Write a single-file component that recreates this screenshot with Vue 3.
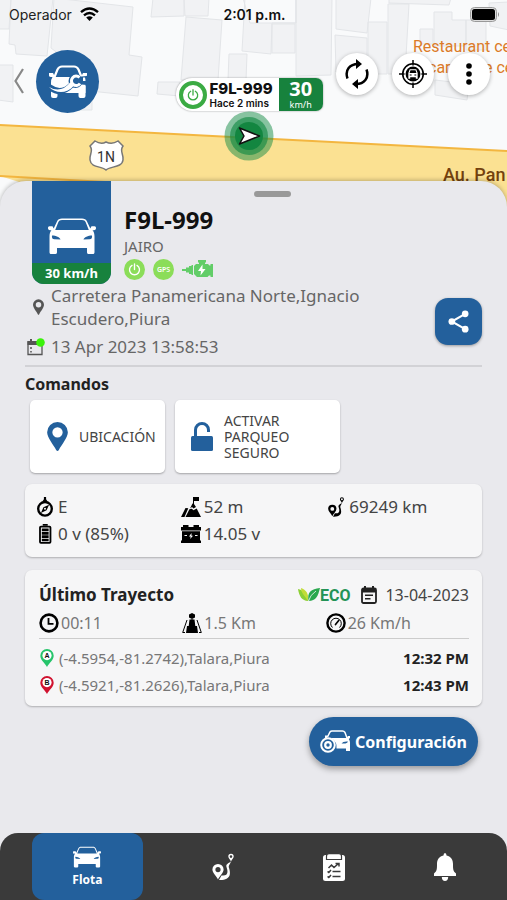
<script setup>
import { ref } from 'vue'

const vehicle = {
  plate: 'F9L-999',
  driver: 'JAIRO',
  speed: 30,
  address: 'Carretera Panamericana Norte,Ignacio Escudero,Piura',
  date: '13 Apr 2023 13:58:53',
}

const stats = [
  { icon: 'compass', text: 'E' },
  { icon: 'mountain', text: '52 m' },
  { icon: 'route', text: '69249 km' },
  { icon: 'battery', text: '0 v (85%)' },
  { icon: 'car-battery', text: '14.05 v' },
]

const tripStats = [
  { icon: 'clock', text: '00:11' },
  { icon: 'road', text: '1.5 Km' },
  { icon: 'gauge', text: '26 Km/h' },
]

const stops = [
  { mark: 'A', place: '(-4.5954,-81.2742),Talara,Piura', time: '12:32 PM' },
  { mark: 'B', place: '(-4.5921,-81.2626),Talara,Piura', time: '12:43 PM' },
]

const tabs = [
  { id: 'fleet', icon: 'car', label: 'Flota' },
  { id: 'routes', icon: 'route', label: 'Rutas' },
  { id: 'reports', icon: 'clipboard', label: 'Reportes' },
  { id: 'alerts', icon: 'bell', label: 'Alertas' },
]
const active = ref('fleet')
</script>

<template>
  <div class="screen">
    <svg class="symbols" aria-hidden="true">
      <symbol id="car" viewBox="0 0 48 36">
        <path fill="currentColor" fill-rule="evenodd" d="M14 0.5H34C36.5 0.5 38 1.3 39 3.5L42.300 10.500L43.500 8.300H46.500C47.800 8.300 48 9.300 48 10.300C48 11.800 47 12.300 44.500 12.300C46 14 46.500 16 46.500 18.500V34C46.500 35.500 46 36 44.800 36H40.500C39.300 36 39 35.300 39 34V30H9V34C9 35.300 8.700 36 7.500 36H3.200C2 36 1.500 35.500 1.500 34V18.500C1.500 16 2 14 3.500 12.300C1 12.300 0 11.800 0 10.300C0 9.300 .2 8.300 1.500 8.300H4.500L5.700 10.500L9 3.500C10 1.300 11.500 .5 14 .5ZM14 2C12 2 11 2.700 10.300 4.200L7.200 12H40.800L37.700 4.200C37 2.700 36 2 34 2ZM4 17.500C3.700 20 4.200 21 6.500 21.200L12.500 21.500C12 19.500 8 17.500 4 17.500ZM44 17.500C40 17.500 36 19.500 35.500 21.500L41.500 21.200C43.800 21 44.300 20 44 17.500Z" />
      </symbol>
      <symbol id="pin" viewBox="0 0 20 28">
        <path fill="currentColor" fill-rule="evenodd" d="M10 0A10 10 0 0 1 20 10C20 15 14 22 11.300 27Q10 29 8.700 27C6 22 0 15 0 10A10 10 0 0 1 10 0ZM10 5A5 5 0 1 0 10 15A5 5 0 1 0 10 5Z" />
      </symbol>
      <symbol id="power" viewBox="0 0 24 24">
        <path fill="none" stroke="currentColor" stroke-width="2.200" stroke-linecap="round" d="M8 5.500A8 8 0 1 0 16 5.500M12 3V12" />
      </symbol>
      <symbol id="route" viewBox="0 0 22 27">
        <path fill="currentColor" fill-rule="evenodd" d="M6 10.500A5.600 5.600 0 0 1 11.600 16C11.600 19.500 7.500 22.500 6 26C4.500 22.500 .4 19.500 .4 16A5.600 5.600 0 0 1 6 10.500ZM6 13.500A2.600 2.600 0 1 0 6 18.700A2.600 2.600 0 1 0 6 13.500ZM19 .3A2.700 2.700 0 0 1 21.700 3C21.700 4.800 19.500 6 19 8.300C18.500 6 16.300 4.800 16.300 3A2.700 2.700 0 0 1 19 .3ZM19 1.800A1.300 1.300 0 1 0 19 4.400A1.300 1.300 0 1 0 19 1.800Z" />
        <path fill="currentColor" d="M18.800 8C16.500 10 13.500 10.500 14.500 13.500C15.500 16.500 17.500 23 9.500 22L7 26.500C20 27 18.500 19 17 14.500C16 11.500 18.500 11 18.800 8Z" />
      </symbol>
      <symbol id="compass" viewBox="0 0 20 22">
        <circle cx="10" cy="13" r="7.500" fill="none" stroke="currentColor" stroke-width="2.600" />
        <path fill="currentColor" fill-rule="evenodd" d="M8.800 2.500V0H11.200V2.500L12.500 4.500H7.500ZM14.500 8.500L11.700 14.700L5.500 17.500L8.300 11.300ZM10 11.900A1.100 1.100 0 1 0 10 14.100A1.100 1.100 0 1 0 10 11.900Z" />
      </symbol>
      <symbol id="mountain" viewBox="0 0 20 20">
        <path fill="currentColor" d="M12 0H18V4H13V7L15 10L12.500 11.500L11 10L9 11.500L11.500 6.500H12ZM8.400 12.200L10.800 11.700L12.500 13.300L15.700 11.500L20 20H4.500ZM4.500 11L7.300 11.300L3.500 20H0Z" />
      </symbol>
      <symbol id="battery" viewBox="0 0 16 22">
        <rect x="2.500" y="2.800" width="11.500" height="18" rx="1" fill="none" stroke="currentColor" stroke-width="2" />
        <path fill="currentColor" d="M5.500 0H11V2H5.500ZM4.500 5H12V7.900H4.500ZM4.500 8.700H12V11.700H4.500ZM4.500 12.500H12V15.400H4.500ZM4.500 16.200H12V18.900H4.500Z" />
      </symbol>
      <symbol id="car-battery" viewBox="0 0 20 18">
        <path fill="currentColor" fill-rule="evenodd" d="M2 0H7.500V2H12.500V0H18V2H20V5.500H0V2H2ZM1 6.200H19V15.500H20V18H0V15.500H1ZM10.500 8L8 11.500H9.700L9.200 14L12 10.700H10.500ZM3.500 10V11H6V10ZM14 10V11H16.500V10Z" />
      </symbol>
      <symbol id="clock" viewBox="0 0 20 20">
        <circle cx="10" cy="10" r="8.400" fill="none" stroke="currentColor" stroke-width="2.600" />
        <path fill="none" stroke="currentColor" stroke-width="1.800" d="M9.500 5V10.800H14.500" />
      </symbol>
      <symbol id="road" viewBox="0 0 20 20">
        <path fill="currentColor" d="M7.500 6.500H12.500L13.300 13H15L16 20H4L5 13H6.700ZM7 1.500L10 0L13 1.500V4.500L10 6L7 4.500Z" />
        <path fill="none" stroke="currentColor" stroke-width="1" d="M5 7L.7 19.500H3M15 7L19.300 19.500H17M10 6V9" />
      </symbol>
      <symbol id="gauge" viewBox="0 0 20 20">
        <circle cx="10" cy="10" r="8.600" fill="none" stroke="currentColor" stroke-width="2.400" />
        <path fill="none" stroke="currentColor" stroke-width="1" d="M6.500 14.500A5.300 5.300 0 1 1 13.500 14.500" />
        <path fill="none" stroke="currentColor" stroke-width="1.700" stroke-linecap="round" d="M9.500 11.500L12.700 7.500" />
      </symbol>
      <symbol id="clipboard" viewBox="0 0 22 28">
        <path fill="currentColor" d="M2.500 2H19.500Q22 2 22 4.500V25.500Q22 28 19.500 28H2.500Q0 28 0 25.500V4.500Q0 2 2.500 2Z" />
        <path fill="currentColor" stroke="#3a3a3a" stroke-width="1.200" d="M6 .6H16Q18.500 .6 18.500 3V6.500H3.500V3Q3.500 .6 6 .6Z" />
        <path fill="none" stroke="#3a3a3a" stroke-width="1.500" d="M5.500 15L8.500 12L11 14.500L15.500 10.500M12.500 10.500H16V13.500M9.500 18.500H17.500M9.500 23.500H17.500M4.500 18.500L5.800 19.500L8 17M4.500 23.500L5.800 24.500L8 22" />
      </symbol>
      <symbol id="bell" viewBox="0 0 22 28">
        <path fill="currentColor" d="M11 0Q12.500 0 12.500 2.500C17.500 3.500 19 7.500 19 11C19 16 19 18 22 20.500V23H0V20.500C3 18 3 16 3 11C3 7.500 4.500 3.500 9.500 2.500Q9.500 0 11 0ZM7.800 24H14.200Q14 28 11 28Q8 28 7.800 24Z" />
      </symbol>
    </svg>

    <header class="map">
      <svg class="map-art" viewBox="0 0 507 220" preserveAspectRatio="xMidYMin slice" aria-hidden="true">
        <rect width="507" height="220" fill="#f9fafb" />
        <g fill="#f1f2f4" stroke="#e3e5e8">
          <path d="M-2 -2H11L9 29H-2ZM11 -2H53L47 56L16 54L15 45L9 44ZM54 -2L133 7L129 55L142 57L138 96L90 91L80 70L51 48ZM-2 65H13V102L-2 100ZM62 92H92V110H70Z" />
          <path d="M153 -2H184V16L151 17ZM184 -2H209L208 16H185ZM186 17L222 20L218 80H181ZM245 -2L242 51L271 54L272 23H296V-2ZM243 -2H296V23H250ZM229 54H247L246 80H228ZM158 82H180V96L157 94ZM272 24H295V53H272ZM296 -2H332L331 75L296 76ZM336 -2H371L367 33L336 29ZM335 35L367 38V72H336ZM368 22H387V74H368ZM388 4H409L405 74H388ZM389 -2H451L449 5L389 3ZM434 12H452V20H466V46H434ZM420 29H433V44H420ZM466 20H486V50H466ZM489 3L509 2V30L490 26ZM435 80L469 84L467 100L435 95Z" />
        </g>
        <path fill="#fbe192" d="M0 125L507 151V220H140L0 176Z" />
        <path fill="none" stroke="#f3b640" stroke-width="2" d="M0 125L507 151M0 176L140 184" />
        <path fill="#fff" stroke="#777" stroke-width="1.500" d="M95 141Q101 145 106 142Q112 145 118 141L123 146C119 151 124 154 123 160C122 168 110 166 106 170C102 166 91 168 90 160C89 154 94 151 90 146Z" />
        <text class="shield-text" x="106" y="162" text-anchor="middle">1N</text>
        <text class="poi" x="413" y="52">Restaurant ce</text>
        <text class="poi" x="428" y="73">car</text>
        <text class="poi" x="484" y="73">e ce</text>
        <text class="road-name" x="443" y="181">Au. Pan</text>
      </svg>

      <div class="status">
        <span class="carrier">Operador
          <svg width="19" height="14" viewBox="0 0 19 14" aria-hidden="true"><path fill="none" stroke="#000" stroke-width="2.400" d="M1 5.200Q9.500 -2.400 18 5.200M4 8.300Q9.500 3.500 15 8.300" /><path d="M9.500 14L6.200 10.600Q9.500 8 12.800 10.600Z" /></svg>
        </span>
        <span class="time">2:01 p.m.</span>
        <svg class="cell" width="30" height="15" viewBox="0 0 30 15" aria-hidden="true"><rect x=".5" y=".5" width="26" height="14" rx="4" fill="#ddd" stroke="#999" /><rect x="2" y="2" width="23" height="11" rx="2.500" /><path fill="#888" d="M28 5Q30 7.500 28 10Z" /></svg>
      </div>

      <div class="tools">
        <button class="back" aria-label="Volver"><svg width="10" height="26" viewBox="0 0 10 26"><path fill="none" stroke="#888" stroke-width="2.200" d="M9 1L1.500 13L9 25" /></svg></button>
        <button class="avatar" aria-label="Servicio">
          <svg width="38" height="33" viewBox="0 0 38 33">
            <path fill="none" stroke="#fff" stroke-width="2.200" stroke-linejoin="round" d="M5.500 12L8.500 4.500Q10 1.500 13 1.500H25Q28 1.500 29.500 4.500L32.500 12" />
            <path fill="#fff" d="M0 8H4L6 12H32L34 8H38V10.500Q37 12 34.500 12Q36.500 14 36.500 18V31Q36.500 33 34.500 33H31.500Q29.500 33 29.500 31V28H8.500V31Q8.500 33 6.500 33H4Q2 33 2 31V18Q2 14 3.500 12Q0 12 0 10.500Z" />
            <path fill="none" stroke="#23609c" stroke-width="6" stroke-linecap="round" d="M1 22.500Q12 30.500 22 20.500" />
            <circle cx="26.500" cy="16" r="7" fill="#23609c" />
            <path fill="#23609c" d="M27 12L38 11V20L27 19Z" />
            <path fill="#fff" d="M33 21H36.500V28H24Q30 26 33 21ZM34 12.500H36Q36.500 14 36.500 16H34Z" />
            <path fill="none" stroke="#fff" stroke-width="3" d="M30.500 12.500A4.700 4.700 0 1 0 31 18.500" />
            <path fill="#fff" d="M0 22Q12 29 21.500 17L25 20.500C18 29 7 29 0 22Z" />
          </svg>
        </button>
        <button class="round first" aria-label="Actualizar">
          <svg width="24" height="30" viewBox="0 0 24 30"><path fill="none" stroke="#000" stroke-width="2.500" d="M2.500 19.500C-.5 11 5 5 13 5M21.500 10.500C24.500 19 19 25 11 25" /><path d="M11 0L17 5L11 10ZM13 20L7 25L13 30Z" /></svg>
        </button>
        <button class="round" aria-label="Centrar">
          <svg width="28" height="28" viewBox="0 0 30 30"><circle cx="15" cy="15" r="11" fill="none" stroke="#000" stroke-width="1.700" /><circle cx="15" cy="15" r="8" /><path stroke="#000" stroke-width="1.600" d="M15 0V6M15 24V30M0 15H6M24 15H30" /><path fill="#fff" fill-rule="evenodd" d="M11.500 10H18.500L20 14V20H18V18.500H12V20H10V14ZM12.300 11L11.300 14H18.700L17.700 11ZM11.500 15.500V16.700H13.500V15.500ZM16.500 15.500V16.700H18.500V15.500Z" /></svg>
        </button>
        <button class="round" aria-label="Más opciones">
          <svg width="6" height="22" viewBox="0 0 6 22"><circle cx="3" cy="3" r="2.800" /><circle cx="3" cy="11" r="2.800" /><circle cx="3" cy="19" r="2.800" /></svg>
        </button>
      </div>

      <div class="tag">
        <span class="tag-power"><svg width="14" height="14"><use href="#power" /></svg></span>
        <span class="tag-text"><b>{{ vehicle.plate }}</b><small>Hace 2 mins</small></span>
        <span class="tag-speed"><b>{{ vehicle.speed }}</b><small>km/h</small></span>
      </div>
      <svg class="puck" width="50" height="50" viewBox="0 0 50 50" aria-hidden="true"><circle cx="25" cy="25" r="24.500" fill="#168b45" opacity=".5" /><circle cx="25" cy="25" r="19" fill="#168b45" opacity=".65" /><circle cx="25" cy="25" r="14" fill="#138640" /><path fill="#fff" stroke="#111" stroke-width="1.500" stroke-linejoin="round" d="M15.500 17L35.500 25L15.500 33L20 25Z" /></svg>
    </header>

    <main class="sheet">
      <span class="handle"></span>
      <section class="hero">
        <div class="thumb">
          <div class="thumb-car"><svg width="48" height="36"><use href="#car" /></svg></div>
          <div class="thumb-speed">{{ vehicle.speed }} km/h</div>
        </div>
        <div class="info">
          <h1>{{ vehicle.plate }}</h1>
          <p>{{ vehicle.driver }}</p>
          <div class="badges">
            <span class="badge"><svg width="15" height="15"><use href="#power" /></svg></span>
            <span class="badge gps">GPS</span>
            <svg width="32" height="19" viewBox="0 0 32 19" aria-hidden="true"><path fill="#62cd68" d="M0 9H4V7.500H7V6H9.500V5H11V15H9.500V14H7V12.500H4V11H0ZM12 6L14 4H17V2.500H16V0H24V2.500H23V4H26L27.500 5.500H28.500V4H31V17H28.500V15.500H27L25.500 17H15L12 14Z" /><path fill="#fff" d="M20.500 4.500L16 11H19L18.500 15.500L23.500 9H20.500Z" /></svg>
          </div>
        </div>
      </section>

      <section class="where">
        <div class="where-text">
          <div class="line">
            <span class="line-icon"><svg width="11" height="16"><use href="#pin" /></svg></span>
            <p>{{ vehicle.address }}</p>
          </div>
          <div class="line date">
            <span class="line-icon"><svg width="18" height="18" viewBox="0 0 18 18" aria-hidden="true"><path fill="none" stroke="#555" stroke-width="1.300" d="M1 4H15V16.500H1Z" /><path fill="#555" d="M.5 3H15V7H.5ZM3 1H5V4H3Z" /><path fill="#777" d="M3 9H5V11H3ZM3 13H5V14.500H3Z" /><circle cx="13.500" cy="4.500" r="4.300" fill="#3bf20b" /></svg></span>
            <p>{{ vehicle.date }}</p>
          </div>
        </div>
        <button class="share" aria-label="Compartir">
          <svg width="21" height="23" viewBox="0 0 22 24"><path fill="none" stroke="#fff" stroke-width="2.200" d="M18 4L4 12L18 20" /><g fill="#fff"><circle cx="18" cy="4" r="3.500" /><circle cx="4" cy="12" r="3.500" /><circle cx="18" cy="20" r="3.500" /></g></svg>
        </button>
      </section>

      <h2>Comandos</h2>
      <section class="commands">
        <button><svg width="21" height="29"><use href="#pin" /></svg><span>UBICACIÓN</span></button>
        <button class="wide">
          <svg width="22" height="29" viewBox="0 0 22 29" aria-hidden="true"><path fill="none" stroke="currentColor" stroke-width="3" d="M4.500 15V8A6.500 6.500 0 0 1 17.500 8V10" /><rect y="14" width="22" height="15" rx="1.500" fill="currentColor" /></svg>
          <span>ACTIVAR PARQUEO SEGURO</span>
        </button>
      </section>

      <section class="card stats">
        <div v-for="s in stats" :key="s.icon" class="stat"><svg width="20" height="20"><use :href="'#' + s.icon" /></svg><span>{{ s.text }}</span></div>
      </section>

      <section class="card trip">
        <div class="trip-head">
          <h2>Último Trayecto</h2>
          <span class="eco"><svg width="22" height="14" viewBox="0 0 22 14" aria-hidden="true"><path fill="#8ccf35" d="M0 1C7 3 11 7 10 13C4 13 1 8 0 1Z" /><path fill="#c2dc38" d="M3 0C8 2 11 5 10 13C7 8 3 5 3 0Z" /><path fill="#2ba84f" d="M22 0C13 1 9 4 10.500 13C18 13 20 8 22 0Z" /><path fill="none" stroke="#f6f6f7" stroke-width=".8" d="M10.500 13Q12 7 18 3" /></svg><b>ECO</b></span>
          <svg width="16" height="18" viewBox="0 0 16 18" aria-hidden="true"><rect x="1" y="2.500" width="14" height="14.500" rx="1.500" fill="none" stroke="#222" stroke-width="1.800" /><path fill="#222" d="M3 0H5V3H11V0H13V3H15V6.500H1V3H3ZM4 8.500H12V10H4ZM4 12H9.500V13.500H4Z" /></svg>
          <time>13-04-2023</time>
        </div>
        <div class="trip-stats">
          <div v-for="s in tripStats" :key="s.icon" class="stat"><svg width="20" height="20"><use :href="'#' + s.icon" /></svg><span>{{ s.text }}</span></div>
        </div>
        <ul class="stops">
          <li v-for="s in stops" :key="s.mark">
            <svg width="16" height="18" viewBox="0 0 14 18" :class="'mark-' + s.mark"><path fill="currentColor" d="M7 0A6.700 6.700 0 0 1 13.700 6.700C13.700 11 9 14 7 18C5 14 .3 11 .3 6.700A6.700 6.700 0 0 1 7 0Z" /><circle cx="7" cy="6.600" r="4.600" fill="#fff" /><text class="mark" x="7" y="9" text-anchor="middle">{{ s.mark }}</text></svg>
            <span>{{ s.place }}</span>
            <time>{{ s.time }}</time>
          </li>
        </ul>
      </section>

      <button class="config">
        <svg width="30" height="23" viewBox="0 0 30 23" aria-hidden="true"><path fill="none" stroke="#fff" stroke-width="1.500" d="M7.500 7L10 2Q10.800 1 12 1H22.500Q24 1 25 2.500L27 8" /><path fill="#fff" fill-rule="evenodd" d="M11 8H26.500L28 6H30V8L28.800 9Q30 10.500 30 12.500V21H26V18.500H16.500Q17.500 12 11 8ZM21.500 13.500H25.500Q27.500 13 28 11.500Q23 11 21.500 13.500ZM5 5.500H8L7 8H5Z" /><circle cx="8" cy="15" r="6.800" fill="none" stroke="#fff" stroke-width="2" /><circle cx="8" cy="15" r="2.800" fill="none" stroke="#fff" stroke-width="2.200" /></svg>
        Configuración
      </button>
    </main>

    <nav class="tabs">
      <button v-for="t in tabs" :key="t.id" :class="{ active: active === t.id }" :aria-label="t.label" @click="active = t.id">
        <svg :width="t.id === 'fleet' ? 28 : 22" :height="t.id === 'fleet' ? 22 : 28"><use :href="'#' + t.icon" /></svg>
        <span v-if="active === t.id">{{ t.label }}</span>
      </button>
    </nav>
  </div>
</template>

<style>
body { background: #e9e9ed; }
</style>

<style scoped>
.screen {
  min-height: 100vh;
  display: flex;
  flex-direction: column;
  position: relative;
  background: #e9e9ed;
  font-family: "Noto Sans", "Open Sans", sans-serif;
  font-size: 17px;
  color: #444;
}
.symbols { position: absolute; width: 0; height: 0; }
svg { display: block; flex: none; }
button { border: 0; padding: 0; margin: 0; background: none; font: inherit; color: inherit; cursor: pointer; }
h1, h2, p, ul { margin: 0; padding: 0; }

.map { position: relative; height: 181px; }
.map-art { position: absolute; top: 0; left: 0; width: 100%; height: 220px; }
.shield-text { font: 14px Roboto, sans-serif; fill: #333; }
.poi { font: 16px Roboto, sans-serif; fill: #dc7b28; }
.road-name { font: 500 18px Roboto, sans-serif; fill: #74410e; }

.status {
  position: relative;
  display: grid;
  grid-template-columns: 1fr auto 1fr;
  align-items: center;
  height: 28px;
  padding: 0 7px 0 9px;
  font-family: Inter, sans-serif;
  font-size: 14px;
  color: #222;
}
.carrier { display: flex; align-items: center; gap: 8px; }
.time { font-weight: 600; color: #111; }
.cell { justify-self: end; }

.tools { position: relative; display: flex; align-items: center; height: 92px; margin-top: 7px; padding: 0 17px 0 14px; }
.back { padding-right: 12px; }
.avatar {
  width: 63px; height: 63px; border-radius: 50%;
  background: #23609c;
  display: grid; place-items: center;
}
.round {
  width: 42px; height: 42px; margin: 0 0 14px 14px; border-radius: 50%;
  background: #fff; box-shadow: 0 1px 4px rgba(0, 0, 0, .3);
  display: grid; place-items: center;
}
.round.first { margin-left: auto; }

.tag {
  position: absolute; top: 78px; left: 50%;
  transform: translateX(-78px);
  display: flex; height: 33px;
  background: #fff; border-radius: 16px 7px 7px 16px;
  box-shadow: 0 0 2px rgba(0, 0, 0, .4);
  color: #111; overflow: hidden;
}
.tag-power {
  width: 20px; height: 20px; margin: 3px; border: 4px solid #3bab43; border-radius: 50%;
  display: grid; place-items: center; color: #3bab43;
}
.tag-text { display: flex; flex-direction: column; justify-content: center; padding-right: 6px; font-family: Inter, sans-serif; }
.tag-text b { font-size: 15px; font-weight: 800; line-height: 17px; }
.tag-text small { font-size: 10px; font-weight: 600; line-height: 13px; }
.tag-speed { width: 44px; background: #17823d; color: #fff; display: flex; flex-direction: column; align-items: center; }
.tag-speed b { font-size: 20px; line-height: 22px; }
.tag-speed small { font-size: 9px; line-height: 10px; }
.puck { position: absolute; top: 111px; left: 50%; transform: translateX(-30px); }

.sheet {
  position: relative;
  flex: 1;
  display: flex;
  flex-direction: column;
  padding: 0 25px 67px;
  background: #e9e9ed;
  border-radius: 26px 26px 0 0;
  box-shadow: 0 -1px 4px rgba(0, 0, 0, .25);
}
.handle { position: absolute; top: 10px; left: 50%; width: 37px; height: 6px; border-radius: 3px; background: #999; }

.hero { display: flex; gap: 13px; padding-left: 7px; }
.thumb { width: 79px; height: 103px; border-radius: 0 0 12px 12px; overflow: hidden; display: flex; flex-direction: column; background: #23609c; color: #fff; }
.thumb-car { flex: 1; display: flex; align-items: flex-end; justify-content: center; padding-bottom: 9px; }
.thumb-speed { background: #17823d; height: 21px; line-height: 21px; font-size: 13px; font-weight: 700; text-align: center; }
.info { padding-top: 24px; }
.info h1 { font-size: 24px; line-height: 30px; color: #111; }
.info p { font-size: 15px; line-height: 22px; color: #666; }
.badges { display: flex; align-items: center; gap: 8px; padding-top: 2px; }
.badge { width: 21px; height: 21px; border-radius: 50%; background: #8bdd59; color: #fff; display: grid; place-items: center; }
.gps { font-size: 7px; font-weight: 600; }

.where { display: flex; align-items: center; justify-content: space-between; padding-bottom: 7px; border-bottom: 2px solid #d2d2d6; color: #666; }
.where-text { width: 340px; }
.line { display: flex; align-items: center; line-height: 23px; }
.line-icon { width: 26px; display: flex; justify-content: center; padding-right: 0; color: #555; }
.line-icon + p { flex: 1; }
.date { padding-top: 5px; }
.date .line-icon { justify-content: flex-start; padding-left: 2px; width: 24px; }
.share { width: 47px; height: 47px; border-radius: 13px; background: #23609c; display: grid; place-items: center; box-shadow: 0 1px 3px rgba(0, 0, 0, .35); }

h2 { font-size: 16px; line-height: 24px; color: #222; }
.sheet > h2 { padding: 5px 0 4px; }
.commands { display: flex; gap: 10px; padding: 0 5px; }
.commands button {
  display: flex; align-items: center; gap: 11px;
  width: 135px; height: 73px; padding-left: 17px;
  background: #fff; border-radius: 5px; box-shadow: 0 1px 2px rgba(0, 0, 0, .3);
  color: #23609c; text-align: left;
}
.commands .wide { width: 165px; padding-left: 16px; }
.commands span { font-size: 14px; line-height: 16px; color: #444; }
.wide span { width: 80px; }

.card { background: #f6f6f7; border-radius: 7px; box-shadow: 0 1px 2px rgba(0, 0, 0, .25); }
.stats { display: grid; grid-template-columns: repeat(3, 1fr); margin-top: 11px; padding: 9px 10px 10px; }
.stat { display: flex; align-items: center; gap: 3px; height: 27px; }
.stat svg { color: #000; }
.trip { margin-top: 13px; padding: 11px 13px 8px 14px; }
.trip-head { display: flex; align-items: center; gap: 8px; height: 28px; }
.trip-head h2 { flex: 1; font-size: 17px; }
.trip-head time { font-size: 16px; }
.eco { display: flex; align-items: center; padding-right: 3px; }
.eco b { font: 700 16px Roboto, sans-serif; color: #239355; }
.trip-stats { display: grid; grid-template-columns: repeat(3, 1fr); padding-bottom: 2px; border-bottom: 1px solid #ccc; font-size: 16px; color: #777; }
.trip-stats .stat { gap: 2px; }
.stops { list-style: none; padding-top: 5px; }
.stops li { display: flex; align-items: center; gap: 4px; height: 27px; font-size: 15px; color: #777; }
.stops span { flex: 1; }
.stops time { font-weight: 700; color: #222; }
.mark-A { color: #26c46b; }
.mark-B { color: #d0122f; }
.mark { font: 700 7px "Liberation Sans", sans-serif; fill: #111; }

.config {
  align-self: flex-end;
  display: flex; align-items: center; justify-content: center; gap: 5px;
  height: 49px; margin: 11px 4px 20px 0; padding: 0 11px;
  border-radius: 25px; background: #23609c; color: #fff;
  font-size: 16px; font-weight: 700;
  box-shadow: 0 3px 6px rgba(0, 0, 0, .35);
}

.tabs {
  position: sticky; bottom: 0;
  display: flex; height: 67px; margin-top: -67px;
  padding: 0 7px 0 32px;
  background: #3a3a3a; border-radius: 18px 18px 0 0; color: #fff;
}
.tabs button { flex: 1; display: flex; flex-direction: column; align-items: center; justify-content: center; gap: 4px; border-radius: 12px; }
.tabs .active { background: #23609c; margin-right: 25px; }
.tabs span { font-size: 12px; line-height: 16px; font-weight: 700; }
</style>
